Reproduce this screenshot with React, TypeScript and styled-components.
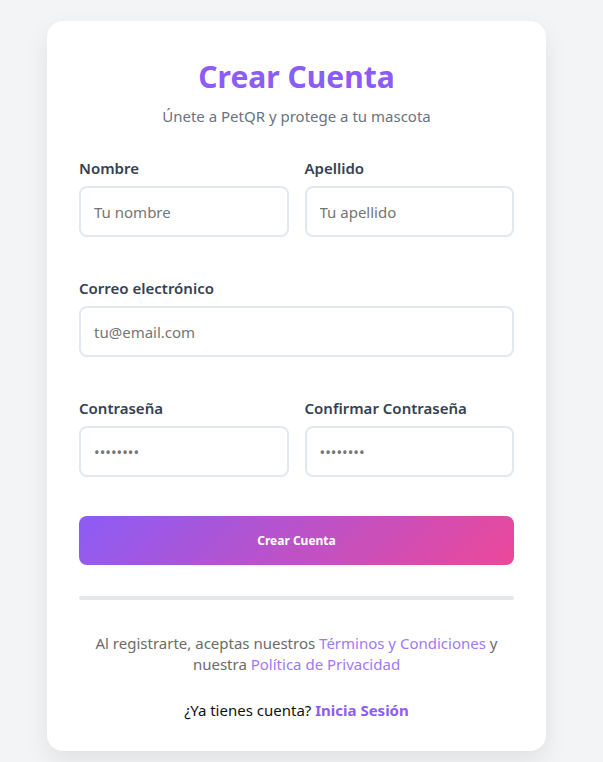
import React from "react";
import styled, { createGlobalStyle } from "styled-components";

const Global = createGlobalStyle`
  html, body { margin: 0; padding: 0; background: #f3f4f6; }
  body { font-family: "Noto Sans", "Open Sans", sans-serif; }
  * { box-sizing: border-box; }
`;

const Page = styled.div`
  min-height: 762px;
  display: flex;
  justify-content: center;
  align-items: flex-start;
  padding: 21px 10px 0 0;
`;

const Card = styled.div`
  width: 499px;
  background: #ffffff;
  border-radius: 16px;
  box-shadow: 0 10px 25px rgba(0, 0, 0, 0.08);
  padding: 38px 32px 30px;
  display: flex;
  flex-direction: column;
`;

const Title = styled.h1`
  margin: 0;
  text-align: center;
  color: #8b5cf6;
  font-size: 30px;
  line-height: 36px;
  font-weight: 700;
`;

const Subtitle = styled.p`
  margin: 10px 0 0;
  text-align: center;
  color: #6b7280;
  font-size: 15px;
  line-height: 22px;
`;

const Row = styled.div<{ $cols: number; $first?: boolean }>`
  display: grid;
  grid-template-columns: repeat(${(p) => p.$cols}, minmax(0, 1fr));
  gap: 16px;
  margin-top: ${(p) => (p.$first ? 30 : 40)}px;
`;

const Field = styled.div`
  display: flex;
  flex-direction: column;
  gap: 7px;
  min-width: 0;
`;

const Label = styled.label`
  font-size: 15px;
  line-height: 22px;
  font-weight: 600;
  color: #334155;
`;

const Input = styled.input`
  width: 100%;
  min-width: 0;
  height: 51px;
  border: 2px solid #e2e8f0;
  border-radius: 8px;
  padding: 0 13px;
  font-family: inherit;
  font-size: 15px;
  color: #111827;
  outline: none;
  background: #fff;
  &::placeholder { color: #757575; }
`;

const Button = styled.button`
  margin-top: 39px;
  height: 49px;
  border: none;
  border-radius: 8px;
  background: linear-gradient(135deg, #8b5cf6 0%, #ec4899 100%);
  color: #fff;
  font-family: inherit;
  font-size: 12px;
  font-weight: 700;
  cursor: pointer;
`;

const Divider = styled.div`
  margin-top: 31px;
  height: 4px;
  border-radius: 2px;
  background: #e5e7eb;
`;

const Terms = styled.p`
  margin: 33px 0 0;
  text-align: center;
  color: #6b6b6b;
  font-size: 15px;
  line-height: 21px;
`;

const Link = styled.a<{ $bold?: boolean }>`
  color: ${(p) => (p.$bold ? "#8b5cf6" : "#a078f8")};
  font-weight: ${(p) => (p.$bold ? 700 : 400)};
  text-decoration: none;
`;

const Login = styled.p`
  margin: 24px 0 0;
  text-align: center;
  color: #111111;
  font-size: 15px;
  line-height: 22px;
`;

export default function App() {
  return (
    <>
      <Global />
      <Page>
        <Card>
          <Title>Crear Cuenta</Title>
          <Subtitle>Únete a PetQR y protege a tu mascota</Subtitle>
          <Row $cols={2} $first>
            <Field>
              <Label>Nombre</Label>
              <Input placeholder="Tu nombre" />
            </Field>
            <Field>
              <Label>Apellido</Label>
              <Input placeholder="Tu apellido" />
            </Field>
          </Row>
          <Row $cols={1}>
            <Field>
              <Label>Correo electrónico</Label>
              <Input placeholder="tu@email.com" />
            </Field>
          </Row>
          <Row $cols={2}>
            <Field>
              <Label>Contraseña</Label>
              <Input type="password" placeholder="••••••••" />
            </Field>
            <Field>
              <Label>Confirmar Contraseña</Label>
              <Input type="password" placeholder="••••••••" />
            </Field>
          </Row>
          <Button>Crear Cuenta</Button>
          <Divider />
          <Terms>
            Al registrarte, aceptas nuestros <Link href="#">Términos y Condiciones</Link> y nuestra{" "}
            <Link href="#">Política de Privacidad</Link>
          </Terms>
          <Login>
            ¿Ya tienes cuenta? <Link href="#" $bold>Inicia Sesión</Link>
          </Login>
        </Card>
      </Page>
    </>
  );
}
